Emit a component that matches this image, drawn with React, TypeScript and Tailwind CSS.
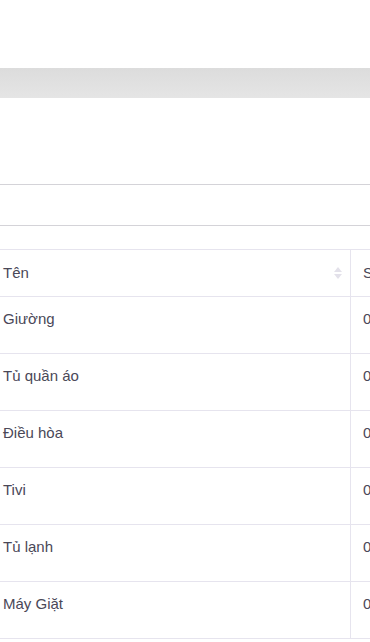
const rows = ["Giường", "Tủ quần áo", "Điều hòa", "Tivi", "Tủ lạnh", "Máy Giặt"];

function SortIcon() {
  return (
    <svg width="10" height="14" viewBox="0 0 10 14" className="shrink-0">
      <path d="M5 1 L9 6 H1 Z" fill="#e3e1ea" />
      <path d="M5 13 L9 8 H1 Z" fill="#e3e1ea" />
    </svg>
  );
}

export default function App() {
  return (
    <div className="w-[370px] h-[642px] overflow-hidden bg-white font-['Liberation_Sans',Arial,sans-serif] text-[#4a4858]">
      <div className="h-[68px]" />
      <div className="h-[30px] bg-gradient-to-b from-[#dcdcdc] to-[#e5e5e5]" />
      <div className="h-[86px]" />
      <div className="h-[42px] border-y border-[#d4d3d8]" />
      <div className="h-[23px]" />
      <div className="w-[440px] border-t border-[#e6e4ee] text-[15px] leading-[22px]">
        <div className="flex h-[47px] border-b border-[#e6e4ee]">
          <div className="flex w-[351px] items-center justify-between border-r border-[#e6e4ee] pl-[3px] pr-[7px]">
            <span>Tên</span>
            <SortIcon />
          </div>
          <div className="flex items-center pl-[12px]">Số lượng</div>
        </div>
        {rows.map((r) => (
          <div key={r} className="flex h-[57px] border-b border-[#e6e4ee]">
            <div className="w-[351px] border-r border-[#e6e4ee] pl-[3px] pt-[11px]">{r}</div>
            <div className="pl-[12px] pt-[11px]">0</div>
          </div>
        ))}
      </div>
    </div>
  );
}
